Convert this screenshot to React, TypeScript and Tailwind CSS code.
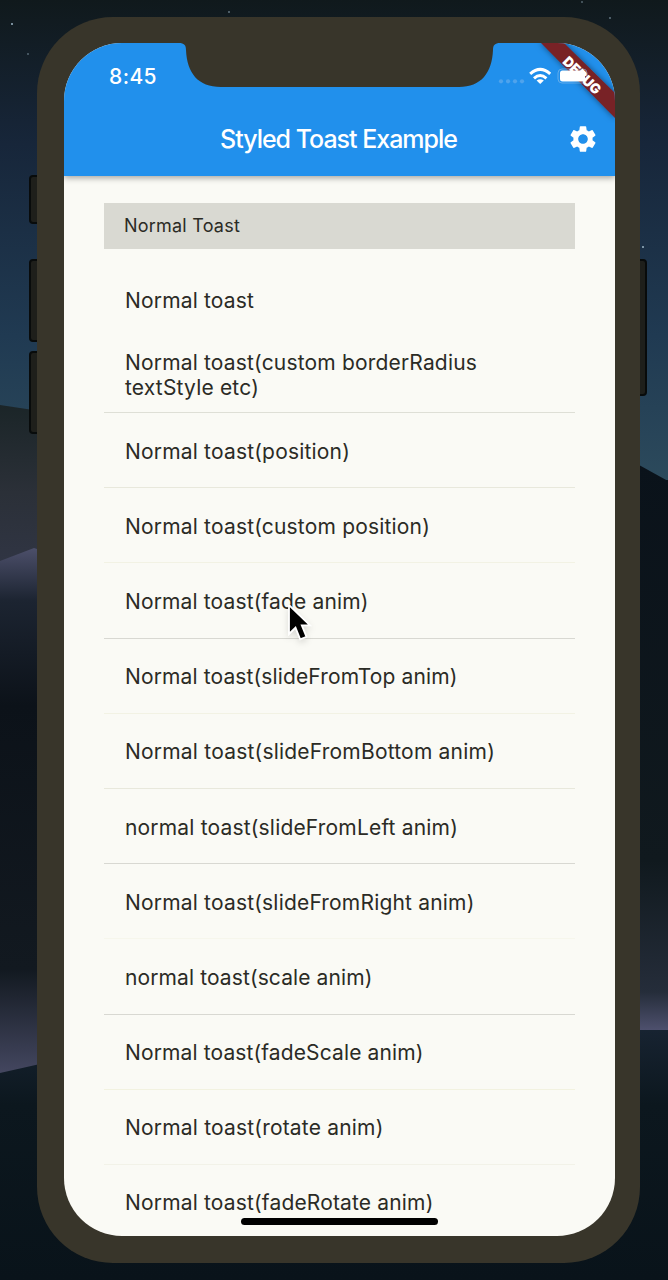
import React from "react";
import { MdSettings } from "react-icons/md";

type Row = { label: string; line: string; width: number };

const rows: Row[] = [
  { label: "Normal toast(position)", line: "bg-[#e8e8dc]", width: 225 },
  { label: "Normal toast(custom position)", line: "bg-[#f2f2e4]", width: 305 },
  { label: "Normal toast(fade anim)", line: "bg-[#d8d8d2]", width: 243.5 },
  { label: "Normal toast(slideFromTop anim)", line: "bg-[#f2f2e4]", width: 332.5 },
  { label: "Normal toast(slideFromBottom anim)", line: "bg-[#e8e8dc]", width: 370 },
  { label: "normal toast(slideFromLeft anim)", line: "bg-[#d8d8d2]", width: 333 },
  { label: "Normal toast(slideFromRight anim)", line: "bg-[#f6f6ec]", width: 349.5 },
  { label: "normal toast(scale anim)", line: "bg-[#d8d8d2]", width: 247.5 },
  { label: "Normal toast(fadeScale anim)", line: "bg-[#f2f2e0]", width: 298.5 },
  { label: "Normal toast(rotate anim)", line: "bg-[#f2f2e8]", width: 258.5 },
  { label: "Normal toast(fadeRotate anim)", line: "bg-transparent", width: 308.5 },
];

function Fit({ text, width }: { text: string; width: number }) {
  const ref = React.useRef<HTMLSpanElement>(null);
  const [spacing, setSpacing] = React.useState(0);
  React.useLayoutEffect(() => {
    if (ref.current) {
      setSpacing((width - ref.current.getBoundingClientRect().width) / text.length);
    }
  }, [text, width]);
  return (
    <span ref={ref} className="inline-block whitespace-nowrap" style={{ letterSpacing: spacing }}>
      {text}
    </span>
  );
}

function Wallpaper() {
  return (
    <svg className="absolute inset-0 h-full w-full" viewBox="0 0 668 1280" preserveAspectRatio="none">
      <defs>
        <linearGradient id="sky" x1="0" y1="0" x2="0" y2="1">
          <stop offset="0" stopColor="#10191c" />
          <stop offset="0.3" stopColor="#17263a" />
          <stop offset="0.7" stopColor="#203a52" />
          <stop offset="1" stopColor="#2c4a5c" />
        </linearGradient>
        <linearGradient id="haze" x1="0" y1="0" x2="0" y2="1">
          <stop offset="0" stopColor="#1b2528" />
          <stop offset="0.5" stopColor="#2b3038" />
          <stop offset="1" stopColor="#313646" />
        </linearGradient>
        <linearGradient id="ridge" x1="0" y1="0" x2="0" y2="1">
          <stop offset="0" stopColor="#4c4f6a" />
          <stop offset="0.1" stopColor="#1c2431" />
          <stop offset="0.3" stopColor="#0c1219" />
          <stop offset="0.8" stopColor="#121920" />
          <stop offset="1" stopColor="#444760" />
        </linearGradient>
        <linearGradient id="right" x1="0" y1="0" x2="0" y2="1">
          <stop offset="0" stopColor="#0a121a" />
          <stop offset="0.7" stopColor="#10191e" />
          <stop offset="0.93" stopColor="#252d3a" />
          <stop offset="1" stopColor="#505270" />
        </linearGradient>
        <linearGradient id="ground" x1="0" y1="0" x2="0" y2="1">
          <stop offset="0" stopColor="#172331" />
          <stop offset="0.3" stopColor="#0c171e" />
          <stop offset="1" stopColor="#09131a" />
        </linearGradient>
      </defs>
      <rect width="668" height="480" fill="url(#sky)" />
      <path d="M0 405 L40 411 V565 L0 580Z" fill="url(#haze)" />
      <path d="M0 561 L34 548 L40 550 V1068 L0 1074Z" fill="url(#ridge)" />
      <path d="M630 460 L668 481 V1032 H630Z" fill="url(#right)" />
      <path d="M0 1073 L40 1064 L630 1030 H668 V1280 H0Z" fill="url(#ground)" />
      <g fill="#9bb4c4">
        <circle cx="12" cy="24" r="1" />
        <circle cx="229" cy="12" r="0.8" />
        <circle cx="28" cy="54" r="0.7" />
        <circle cx="610" cy="18" r="0.8" />
        <circle cx="582" cy="2" r="0.7" />
        <circle cx="643" cy="247" r="1" />
      </g>
    </svg>
  );
}

function StatusIcons() {
  return (
    <svg className="absolute top-0 right-0 h-[80px] w-[125px]" viewBox="490 43 125 80">
      <defs>
        <filter id="ribbonShadow" x="-20%" y="-20%" width="140%" height="140%">
          <feDropShadow dx="0" dy="0" stdDeviation="3" floodColor="#000" floodOpacity="0.5" />
        </filter>
      </defs>
      <g fill="#4fa3ec">
        <circle cx="501" cy="81.3" r="2.1" />
        <circle cx="508" cy="81.3" r="2.1" />
        <circle cx="515" cy="81.3" r="2.1" />
        <circle cx="522" cy="81.3" r="2.1" />
      </g>
      <g fill="none" stroke="#fff" strokeWidth="3">
        <path d="M530.2 73.8 Q540.2 65 550.2 73.8" />
        <path d="M534 78.3 Q540.2 72.8 546.4 78.3" />
      </g>
      <path d="M536.6 80.6 Q540.2 77.9 543.8 80.6 L540.2 84Z" fill="#fff" />
      <path d="M540 42 H563 L616 94 V119Z" fill="#782126" filter="url(#ribbonShadow)" />
      <rect x="558" y="69" width="29" height="14" rx="4" fill="none" stroke="#8bbfed" strokeOpacity=".6" />
      <rect x="560" y="70.5" width="25" height="11" rx="2.5" fill="#fff" />
      <text
        x="582"
        y="80.4"
        textAnchor="middle"
        transform="rotate(44.5 582 75.5)"
        fontFamily="Inter, sans-serif"
        fontSize="14"
        fontWeight="900"
        textLength="47"
        lengthAdjust="spacingAndGlyphs"
        fill="#fff"
      >
        DEBUG
      </text>
    </svg>
  );
}

function Phone() {
  return (
    <div className="mt-[17px] ml-[37px] h-[1246px] w-[603px] rounded-[76px] bg-[#38352a] pt-[26px] pl-[27px]">
      <main className="relative flex h-[1193px] w-[551px] flex-col overflow-hidden rounded-[58px] bg-[#fafaf5]">
        <header className="relative z-10 flex h-[133px] shrink-0 flex-col bg-[#2190ec] text-white shadow-[0_2px_6px_rgba(0,0,0,0.35)]">
          <svg className="absolute top-0 left-[115px] h-[45px] w-[321px]" viewBox="179 43 321 45">
            <path
              d="M179 42 V43 C184 43 186 45 186 50 C187 73 198 87 221 87 H459 C481 87 492 73 493 50 C493 45 495 43 500 43 V42Z"
              fill="#38352a"
            />
          </svg>
          <StatusIcons />
          <div className="flex h-[66px] items-center pt-px pl-[45px] text-[21px] font-medium">
            <Fit text="8:45" width={48} />
          </div>
          <div className="flex h-[60px] items-center pl-[156px]">
            <h1 className="w-[349px] text-[25px] leading-none font-medium">
              <Fit text="Styled Toast Example" width={237} />
            </h1>
            <MdSettings className="-ml-[2px] h-8 w-8" />
          </div>
        </header>
        <section className="flex flex-col px-10 pt-[27px] text-[21px] leading-[25px] text-[#2b2b25]">
          <h2 className="flex h-[46px] w-[471px] items-center bg-[#d9d9d2] pb-px pl-5 text-[18px]">
            <Fit text="Normal Toast" width={116} />
          </h2>
          <div className="flex h-[89px] items-end pb-[25px] pl-[21px]">
            <Fit text="Normal toast" width={129} />
          </div>
          <div className="flex h-[74px] flex-col items-start justify-end pb-[12px] pl-[21px]">
            <Fit text="Normal toast(custom borderRadius" width={352} />
            <Fit text="textStyle etc)" width={134} />
          </div>
          <div className="h-px w-[471px] shrink-0 bg-[#dedfd6]" />
          {rows.map((row) => (
            <div key={row.label} className="flex h-[75.2px] w-[471px] shrink-0 flex-col">
              <div className="flex grow items-center pt-[2px] pl-[21px]">
                <Fit text={row.label} width={row.width} />
              </div>
              <div className={`h-px w-full ${row.line}`} />
            </div>
          ))}
        </section>
        <div className="absolute bottom-[11px] left-[177px] h-[7px] w-[197px] rounded-full bg-black" />
        <svg className="absolute top-[562px] left-[223px] h-[38px] w-[26px] drop-shadow-md" viewBox="0 0 26 38">
          <path
            d="M2 0 V29 L8.5 22.7 L13.2 34.4 L19.5 31.8 L14.8 20.3 H23Z"
            fill="#000"
            stroke="#fff"
            strokeWidth="1.8"
            strokeLinejoin="miter"
          />
        </svg>
      </main>
    </div>
  );
}

export default function App() {
  return (
    <div className="relative h-[1280px] w-[668px] overflow-hidden bg-[#0b1419] font-['Inter',sans-serif]">
      <Wallpaper />
      <div className="absolute top-[175px] left-[29px] h-[49px] w-5 rounded-[4px] border-2 border-[#080b0b] bg-[#1e1f1b]" />
      <div className="absolute top-[259px] left-[29px] h-[83px] w-5 rounded-[4px] border-2 border-[#080b0b] bg-[#1e1f1b]" />
      <div className="absolute top-[351px] left-[29px] h-[83px] w-5 rounded-[4px] border-2 border-[#080b0b] bg-[#1e1f1b]" />
      <div className="absolute top-[259px] left-[630px] h-[137px] w-[17px] rounded-[4px] border-2 border-[#080b0b] bg-[#1e1f1b]" />
      <div className="relative flex">
        <Phone />
      </div>
    </div>
  );
}
